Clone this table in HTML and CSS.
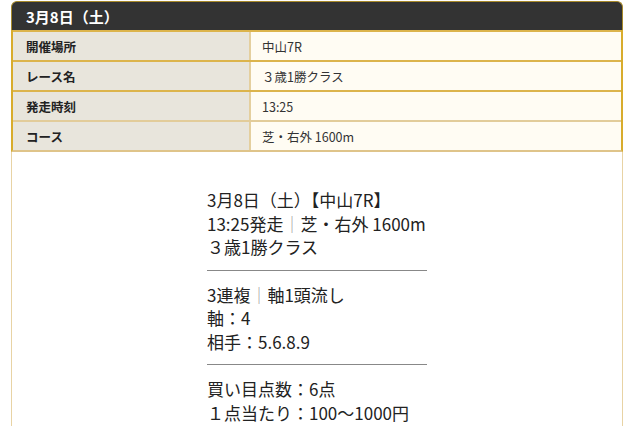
FILE: index.html
```html
<!DOCTYPE html>
<html lang="ja">
<head>
<meta charset="utf-8">
<link rel="stylesheet" href="styles.css">
</head>
<body>
<div class="card">
  <div class="head">3月8日（土）</div>
  <div class="info">
    <div class="row"><div class="label">開催場所</div><div class="value">中山7R</div></div>
    <div class="row"><div class="label">レース名</div><div class="value">３歳1勝クラス</div></div>
    <div class="row"><div class="label">発走時刻</div><div class="value">13:25</div></div>
    <div class="row"><div class="label">コース</div><div class="value">芝・右外 1600m</div></div>
  </div>
  <div class="body">
    <div class="pick">
      <p>3月8日（土）【中山7R】</p>
      <p>13:25発走<span class="bar">｜</span>芝・右外 1600m</p>
      <p>３歳1勝クラス</p>
      <hr class="sep">
      <p>3連複<span class="bar">｜</span>軸1頭流し</p>
      <p>軸：4</p>
      <p>相手：5.6.8.9</p>
      <hr class="sep">
      <p>買い目点数：6点</p>
      <p>１点当たり：100～1000円</p>
    </div>
  </div>
</div>
</body>
</html>
```
FILE: styles.css
```css
html, body {
  margin: 0;
  padding: 0;
  background: #fff;
}
body {
  font-family: "Noto Sans CJK JP", "Noto Sans", sans-serif;
  color: #222;
}
.card {
  margin: 1px 17px 0 11px;
}
.head {
  box-sizing: border-box;
  height: 29px;
  background: #333;
  border: 1px solid #a88a2a;
  border-bottom: none;
  border-radius: 6px 6px 0 0;
  color: #fff;
  font-size: 15px;
  font-weight: bold;
  padding-left: 14px;
  display: flex;
  align-items: center;
}
.info {
  border-left: 2px solid #d8ac2c;
  border-right: 2px solid #d8ac2c;
  border-bottom: 2px solid #dfc48a;
}
.row {
  display: grid;
  grid-template-columns: 238px 1fr;
  height: 30px;
  box-sizing: border-box;
  border-top: 2px solid #dcb44c;
}
.row:last-child {
  border-top-color: #e2cc9a;
}
.label {
  background: #e8e5dc;
  border-right: 2px solid #e4cf9e;
  padding-left: 13px;
  font-size: 12.5px;
  font-weight: bold;
  color: #222;
  display: flex;
  align-items: center;
}
.value {
  background: #fffcf3;
  padding-left: 11px;
  font-size: 12.5px;
  color: #333;
  display: flex;
  align-items: center;
}
.body {
  border-left: 1px solid #e8d3a4;
  border-right: 1px solid #e8d3a4;
  padding: 36px 0 40px;
  background: #fff;
}
.pick {
  width: 220px;
  margin: 0 auto;
  font-size: 17px;
  line-height: 23.5px;
  color: #222;
}
.pick p {
  margin: 0;
  white-space: nowrap;
}
.bar {
  color: #999;
  font-weight: 300;
}
.sep {
  border: none;
  border-top: 1px solid #888;
  margin: 11px 0 12px;
  height: 0;
}
```
